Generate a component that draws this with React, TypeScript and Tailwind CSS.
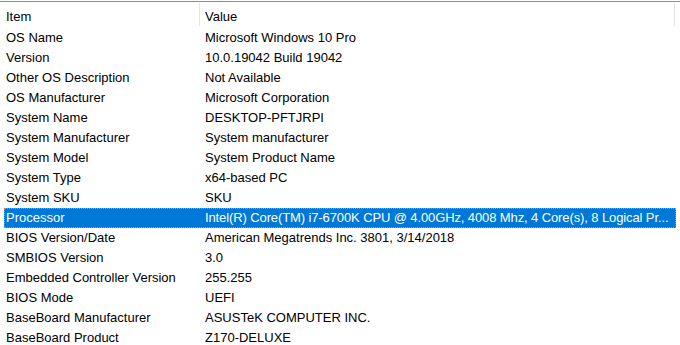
const rows: [string, string][] = [
  ["OS Name", "Microsoft Windows 10 Pro"],
  ["Version", "10.0.19042 Build 19042"],
  ["Other OS Description", "Not Available"],
  ["OS Manufacturer", "Microsoft Corporation"],
  ["System Name", "DESKTOP-PFTJRPI"],
  ["System Manufacturer", "System manufacturer"],
  ["System Model", "System Product Name"],
  ["System Type", "x64-based PC"],
  ["System SKU", "SKU"],
  [
    "Processor",
    "Intel(R) Core(TM) i7-6700K CPU @ 4.00GHz, 4008 Mhz, 4 Core(s), 8 Logical Pr...",
  ],
  ["BIOS Version/Date", "American Megatrends Inc. 3801, 3/14/2018"],
  ["SMBIOS Version", "3.0"],
  ["Embedded Controller Version", "255.255"],
  ["BIOS Mode", "UEFI"],
  ["BaseBoard Manufacturer", "ASUSTeK COMPUTER INC."],
  ["BaseBoard Product", "Z170-DELUXE"],
];

const SELECTED = 9;

export default function App() {
  return (
    <div
      className="h-[345px] w-[680px] overflow-hidden bg-white pt-px text-[13px] text-black"
      style={{ fontFamily: '"Liberation Sans", Arial, sans-serif' }}
    >
      <div className="border-t border-[#8c8c8c]">
        {/* header */}
        <div className="flex h-[26px]">
          <div className="flex w-[200px] items-start">
            <span className="w-[199px] pl-[6px] pt-[5px] leading-[20px]">Item</span>
            <span className="mt-[1px] h-[23px] w-px bg-[#e5e5e5]" />
          </div>
          <div className="flex flex-1 items-start">
            <span className="w-[474px] pl-[5px] pt-[5px] leading-[20px]">Value</span>
            <span className="mt-[1px] h-[23px] w-px bg-[#e5e5e5]" />
          </div>
        </div>

        {/* rows */}
        {rows.map(([item, value], i) => {
          const sel = i === SELECTED;
          return (
            <div key={item} className="flex h-[20px]">
              <div
                className={
                  sel
                    ? "ml-[4px] flex w-[672px] items-center border border-dotted border-[#e8892a] bg-[#0078d7] text-white"
                    : "flex w-full items-center"
                }
              >
                <span
                  className={
                    sel
                      ? "w-[200px] shrink-0 pl-[1px] leading-[18px]"
                      : "w-[205px] shrink-0 pl-[6px] leading-[20px]"
                  }
                >
                  {item}
                </span>
                <span
                  className={
                    sel
                      ? "whitespace-nowrap leading-[18px] tracking-[-0.11px]"
                      : "whitespace-nowrap leading-[20px]"
                  }
                >
                  {value}
                </span>
              </div>
            </div>
          );
        })}
      </div>
    </div>
  );
}
